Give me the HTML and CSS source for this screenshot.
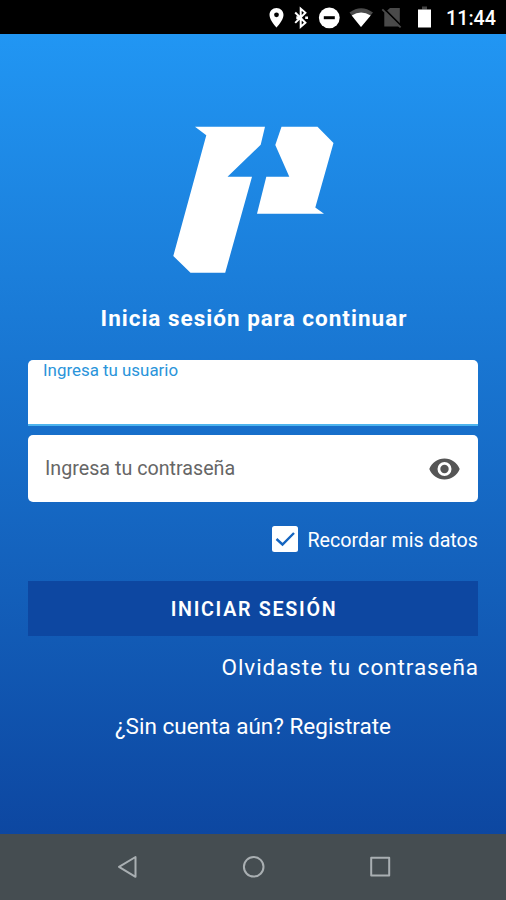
FILE: index.html
```html
<!DOCTYPE html>
<html lang="es">
<head>
<meta charset="utf-8">
<title>Inicia sesión</title>
<link rel="stylesheet" href="styles.css">
</head>
<body>
<div class="screen">
  <header class="status-bar">
    <svg class="status-icons" width="180" height="34" viewBox="256 0 180 34" aria-hidden="true">
      <path fill="#fff" fill-rule="evenodd" d="M276.500 8c-4 0-7 3-7 7 0 5.300 7 12.500 7 12.500s7-7.200 7-12.500c0-4-3-7-7-7zm0 4.400a2.400 2.400 0 1 1 0 4.800 2.400 2.400 0 0 1 0-4.800z"/>
      <path fill="none" stroke="#fff" stroke-width="2" d="M295.200 12.500l10.200 10.200-4.700 4.100V8.600l4.700 4.100-10.200 10.200"/>
      <path fill="#fff" d="M296.300 16.300h3v3h-3zM305.200 16.500h2.800v2.600h-2.800z"/>
      <circle cx="329.300" cy="17.800" r="10.400" fill="#fff"/>
      <path fill="#000" d="M323.800 16.200h11v3h-11z"/>
      <path fill="#4b4b4b" d="M349.500 12.600Q361 3.800 373 12.600L361 27z"/>
      <path fill="#fff" d="M351.700 15.600Q361 9.500 370.700 15.600L361 27z"/>
      <path fill="#4a4a4a" d="M390 8h9.800v18.500H384.300V13z"/>
      <path fill="none" stroke="#000" stroke-width="2" d="M383.700 8.400L402 26.700"/>
      <path fill="none" stroke="#4a4a4a" stroke-width="1.800" d="M382.300 9.400L400.600 27.300"/>
      <path fill="#444" d="M422 6.500h5v3h-5z"/>
      <path fill="#fff" d="M418 9.500h13v18h-13z"/>
    </svg>
    <time class="clock">11:44</time>
  </header>
  <main class="login">
    <svg class="logo" width="162" height="148" viewBox="172 126 162 148" aria-label="Logo">
      <path fill="#fff" d="M195 126.800H265L260.700 144.700 227.500 176.800H252L225.200 272.800H190.500L173.300 256 206.300 135.200z"/>
      <path fill="#fff" d="M281.500 126.800H317.500L333.500 143 315.300 207.500 324 213.700H257L266.300 176.800H289.300L275.300 145z"/>
    </svg>
    <h1 class="title">Inicia sesión para continuar</h1>
    <form class="form">
      <label class="field field-active"><span>Ingresa tu usuario</span></label>
      <label class="field field-password"><span>Ingresa tu contraseña</span>
        <svg width="31" height="22" viewBox="0 0 31 22" aria-hidden="true">
          <path fill="#555" fill-rule="evenodd" d="M15.500 .5C8.500 .5 2.700 4.900 .3 11c2.400 6.100 8.200 10.500 15.200 10.500S28.300 17.100 30.700 11C28.300 4.900 22.500 .5 15.500 .5zm0 3.500a7 7 0 1 1 0 14 7 7 0 0 1 0-14zm0 2.800a4.200 4.200 0 1 0 0 8.400 4.200 4.200 0 0 0 0-8.400z"/>
        </svg>
      </label>
      <label class="remember">
        <svg width="26" height="26" viewBox="0 0 26 26" aria-hidden="true">
          <rect width="26" height="26" rx="2.500" fill="#fff"/>
          <path fill="none" stroke="#1565c0" stroke-width="2.400" d="M4.500 13l6 5.500L22 7"/>
        </svg>
        <span>Recordar mis datos</span>
      </label>
      <button class="submit" type="button">INICIAR SESIÓN</button>
      <a class="forgot">Olvidaste tu contraseña</a>
      <a class="register">¿Sin cuenta aún? Registrate</a>
    </form>
  </main>
  <nav class="nav-bar">
    <svg width="506" height="66" viewBox="0 834 506 66" fill="none" stroke="#a9afb2" stroke-width="2" stroke-linejoin="round" aria-hidden="true">
      <path d="M119 866.800L135.500 857V876.800z"/>
      <circle cx="253.700" cy="866.800" r="9.800"/>
      <rect x="371.200" y="857.800" width="18" height="17.600"/>
    </svg>
  </nav>
</div>
</body>
</html>
```

FILE: styles.css
```css
* { box-sizing: border-box; }
body { margin: 0; font-family: Roboto, sans-serif; color: #fff; }
.screen { display: flex; flex-direction: column; width: 506px; height: 900px; overflow: hidden; }
.status-bar { display: flex; flex: none; height: 34px; padding-right: 10px; background: #000; justify-content: flex-end; align-items: center; }
.status-icons { margin-right: 10px; }
.clock { font-size: 19.700px; font-weight: 500; line-height: 34px; padding-top: 3px; }
.login { flex: 1; display: flex; flex-direction: column; align-items: center; padding: 92px 28px 0; background: linear-gradient(#2196f3, #0d47a1); }
.logo { flex: none; margin-right: 1px; }
.title { margin: 30px 0 0 2px; font-size: 22.500px; line-height: 28px; font-weight: 700; letter-spacing: 1px; white-space: nowrap; }
.form { display: flex; flex-direction: column; width: 450px; margin-top: 28px; }
.field { display: flex; flex: none; background: #fff; }
.field-active { height: 66px; border-radius: 5px 5px 0 0; border-bottom: 2px solid #4db4ee; padding: 0 15px; color: #2a94da; font-size: 16.900px; line-height: 20px; }
.field-password { height: 67px; margin-top: 9px; border-radius: 5px; padding: 0 18px 0 17px; align-items: center; justify-content: space-between; color: #666; font-size: 19.700px; }
.remember { display: flex; height: 26px; margin-top: 24px; align-items: center; justify-content: flex-end; gap: 9px; font-size: 19.700px; }
.remember span { padding-top: 2px; }
.submit { height: 55px; margin-top: 29px; border: 0; padding: 2px 0 0 2px; background: #0d47a1; color: #fff; font: 600 19.700px/53px Roboto, sans-serif; letter-spacing: 1.700px; }
.forgot { margin: 17px -1px 0 0; line-height: 28px; font-size: 22.500px; letter-spacing: .930px; text-align: right; }
.register { margin-top: 31px; line-height: 28px; font-size: 22.500px; text-align: center; }
.nav-bar { flex: none; height: 66px; background: #454d51; }
.nav-bar svg { display: block; }
```
